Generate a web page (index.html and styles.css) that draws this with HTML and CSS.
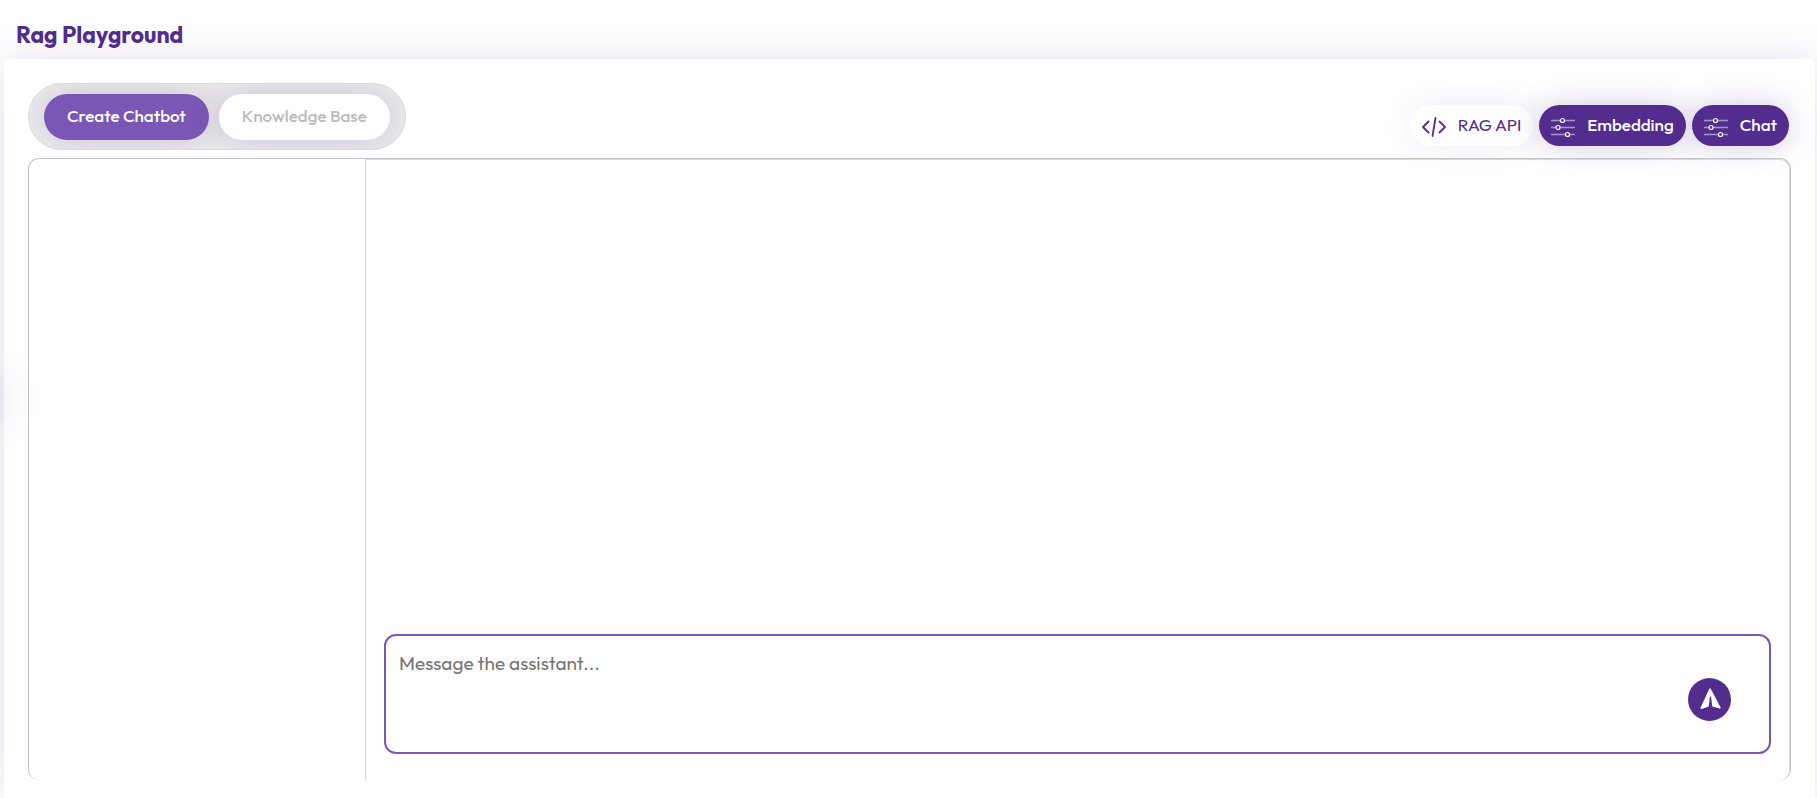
FILE: index.html
```html
<!DOCTYPE html>
<html lang="en">
<head>
    <meta charset="UTF-8">
    <meta name="viewport" content="width=device-width, initial-scale=1.0">
    <title>Rag Playground</title>
    <link rel="stylesheet" href="styles.css">
</head>
<body>
    <header class="page-header">
        <h1>Rag Playground</h1>
    </header>

    <main class="card">
        <div class="toolbar">
            <nav class="tabs">
                <button type="button" class="tab active">Create Chatbot</button>
                <button type="button" class="tab">Knowledge Base</button>
            </nav>

            <div class="actions">
                <button type="button" class="action light">
                    <svg class="icon" viewBox="0 0 24 24" aria-hidden="true">
                        <path d="M6.500 7.500L1 13l5.500 5.500M17.500 7.500L23 13l-5.500 5.500M13.500 4l-3 18" fill="none" stroke="currentColor" stroke-width="1.800" stroke-linecap="round" stroke-linejoin="round"/>
                    </svg>
                    <span>RAG API</span>
                </button>
                <button type="button" class="action">
                    <svg class="icon" viewBox="0 0 24 24" aria-hidden="true">
                        <path d="M0 6.500h9.500M13.500 6.500H24M0 13.500h5M9 13.500h15M0 20.500h14.500M18.500 20.500H24" stroke="#a996c8" stroke-width="1.600"/>
                        <g fill="none" stroke="#fff" stroke-width="1.200">
                            <circle cx="11.500" cy="6.500" r="2"/>
                            <circle cx="7" cy="13.500" r="2"/>
                            <circle cx="16.500" cy="20.500" r="2"/>
                        </g>
                    </svg>
                    <span>Embedding</span>
                </button>
                <button type="button" class="action">
                    <svg class="icon" viewBox="0 0 24 24" aria-hidden="true">
                        <path d="M0 6.500h9.500M13.500 6.500H24M0 13.500h5M9 13.500h15M0 20.500h14.500M18.500 20.500H24" stroke="#a996c8" stroke-width="1.600"/>
                        <g fill="none" stroke="#fff" stroke-width="1.200">
                            <circle cx="11.500" cy="6.500" r="2"/>
                            <circle cx="7" cy="13.500" r="2"/>
                            <circle cx="16.500" cy="20.500" r="2"/>
                        </g>
                    </svg>
                    <span>Chat</span>
                </button>
            </div>
        </div>

        <div class="workspace">
            <aside class="sidebar"></aside>
            <section class="chat">
                <form class="composer">
                    <textarea placeholder="Message the assistant..." aria-label="Message"></textarea>
                    <button type="button" class="send" aria-label="Send">
                        <svg viewBox="0 0 24 24" aria-hidden="true">
                            <path d="M11.300 1.800q.7-1.300 1.400 0l9.800 18.500q.4 1.400-.9 1.200L14.300 19.600 13 9.500h-1L10.700 19.600 3.500 22q-1.300.2-1-1.200z" fill="#fff"/>
                        </svg>
                    </button>
                </form>
            </section>
        </div>
    </main>
</body>
</html>
```
FILE: styles.css
```css
* {
    margin: 0;
    padding: 0;
    box-sizing: border-box;
}

body {
    display: flex;
    flex-direction: column;
    min-height: 100vh;
    overflow: hidden;
    background-color: #fff;
    color: #522d8e;
    font-family: Outfit, Lato, sans-serif;
}

/* glow of the collapsed side menu */
body::before {
    content: "";
    position: absolute;
    top: calc(50% - 15px);
    left: -36px;
    width: 30px;
    height: 30px;
    border-radius: 50%;
    box-shadow: 0 0 40px 10px rgba(82, 45, 142, 0.15);
}

button,
textarea {
    font-family: inherit;
    border: none;
}

button {
    cursor: pointer;
}

.page-header {
    padding: 20px 16px 9px;
}

.page-header h1 {
    font-size: 23px;
    line-height: 30px;
    font-weight: 700;
}

.card {
    flex: 1;
    display: flex;
    flex-direction: column;
    margin: 0 2px 0 4px;
    padding: 24px 24px 18px;
    border-radius: 5px 5px 0 0;
    background-color: #fff;
    box-shadow: 0 0 40px rgba(82, 45, 142, 0.15);
}

.toolbar {
    display: flex;
    justify-content: space-between;
    align-items: flex-end;
    margin-bottom: 8px;
}

.tabs {
    display: flex;
    gap: 10px;
    padding: 10px 15px 9px;
    border: 1px solid #d9d9d9;
    border-radius: 34px;
    background-color: #ebebeb;
    overflow: hidden;
}

.tab {
    height: 46px;
    padding: 0 23px 4px;
    border-radius: 23px;
    background-color: #fff;
    color: #bbb;
    font-size: 17px;
    font-weight: 500;
    box-shadow: 0 0 30px rgba(82, 45, 142, 0.2);
}

.tab.active {
    background-color: #7b57b5;
    color: #fff;
}

.actions {
    display: flex;
    gap: 6px;
    padding: 0 2px 4px 0;
}

.action {
    display: flex;
    align-items: center;
    gap: 12px;
    height: 41px;
    padding: 0 12px;
    border-radius: 21px;
    background-color: #522d8e;
    color: #fff;
    font-size: 17px;
    font-weight: 500;
    box-shadow: 0 0 30px rgba(82, 45, 142, 0.25);
}

.action.light {
    background-color: #fff;
    color: #522d8e;
    font-weight: 400;
    box-shadow: 0 0 30px rgba(82, 45, 142, 0.1);
}

.action span {
    padding-bottom: 2px;
}

.icon {
    width: 24px;
    height: 24px;
}

.workspace {
    flex: 1;
    display: flex;
    border: 1px solid #c4c4c4;
    border-bottom: none;
    border-radius: 11px;
}

.sidebar {
    width: 336px;
}

.chat {
    flex: 1;
    display: flex;
    flex-direction: column;
    justify-content: flex-end;
    padding: 0 18px 26px;
    border: 1px solid #dadada;
    border-bottom: none;
    border-radius: 0 10px 10px 0;
}

.composer {
    display: flex;
    align-items: center;
    height: 120px;
    padding-right: 38px;
    border: 2px solid #7b57b5;
    border-radius: 12px;
}

.composer textarea {
    flex: 1;
    height: 100%;
    padding: 14px 13px;
    background: none;
    color: #333;
    font-size: 19px;
    font-weight: 400;
    line-height: 26px;
    resize: none;
    outline: none;
}

.composer textarea::placeholder {
    color: #757575;
}

.send {
    display: flex;
    align-items: center;
    justify-content: center;
    width: 43px;
    height: 43px;
    margin-top: 10px;
    border-radius: 50%;
    background-color: #522d8e;
}

.send svg {
    width: 24px;
    height: 24px;
}
```
